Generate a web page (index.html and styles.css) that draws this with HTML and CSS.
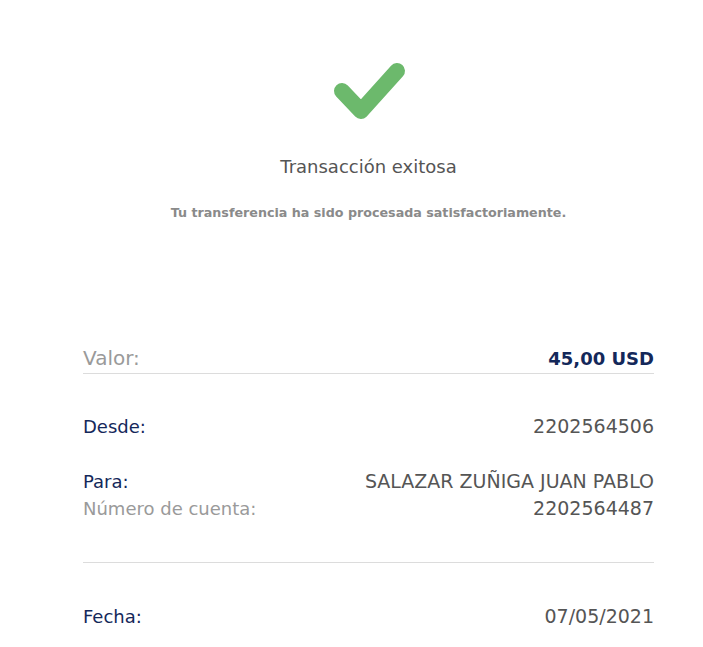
FILE: index.html
```html
<!DOCTYPE html>
<html lang="es">
<head>
<meta charset="utf-8">
<link rel="stylesheet" href="styles.css">
</head>
<body>
<main class="page">
  <section class="status">
    <svg class="check" width="80" height="66" viewBox="0 0 80 66">
      <polyline points="13,33 32,53 68,13" fill="none" stroke="#6cb96c" stroke-width="16" stroke-linecap="round" stroke-linejoin="round"/>
    </svg>
    <h1 class="title">Transacción exitosa</h1>
    <p class="subtitle">Tu transferencia ha sido procesada satisfactoriamente.</p>
  </section>
  <section class="details">
    <div class="row row-amount">
      <span class="label-big">Valor:</span>
      <span class="amount">45,00 USD</span>
    </div>
    <div class="row row-from">
      <span class="label">Desde:</span>
      <span class="value">2202564506</span>
    </div>
    <div class="group-to">
      <div class="row">
        <span class="label">Para:</span>
        <span class="value">SALAZAR ZUÑIGA JUAN PABLO</span>
      </div>
      <div class="row">
        <span class="label-muted">Número de cuenta:</span>
        <span class="value">2202564487</span>
      </div>
    </div>
    <div class="row row-date">
      <span class="label">Fecha:</span>
      <span class="value">07/05/2021</span>
    </div>
  </section>
</main>
</body>
</html>
```
FILE: styles.css
```css
* { box-sizing: border-box; }
html, body { margin: 0; padding: 0; background: #fff; }
body { font-family: "DejaVu Sans", sans-serif; }
.page {
  width: 571px;
  margin-left: 83px;
  padding-top: 58px;
}
.status {
  display: flex;
  flex-direction: column;
  align-items: center;
}
.check { display: block; }
.title {
  margin: 31px 0 0;
  font-size: 18px;
  font-weight: normal;
  color: #555;
  line-height: 24px;
}
.subtitle {
  margin: 26px 0 0;
  font-size: 12.7px;
  font-weight: bold;
  color: #8a8a8a;
  line-height: 16px;
}
.details { margin-top: 124px; }
.row {
  display: flex;
  justify-content: space-between;
  align-items: baseline;
  line-height: 26px;
}
.row-amount {
  border-bottom: 1px solid #dcdcdc;
  padding-bottom: 1px;
}
.label-big { font-size: 20px; color: #9a9a9a; }
.amount { font-size: 18px; font-weight: bold; color: #14285a; }
.label { font-size: 18px; color: #14285a; }
.label-muted { font-size: 18px; color: #9a9a9a; }
.value { font-size: 19px; color: #555; }
.row-from { margin-top: 39px; }
.group-to {
  margin-top: 28px;
  padding-bottom: 40px;
  border-bottom: 1px solid #dcdcdc;
}
.group-to .row + .row { line-height: 27px; }
.row-date { margin-top: 40px; }
```
